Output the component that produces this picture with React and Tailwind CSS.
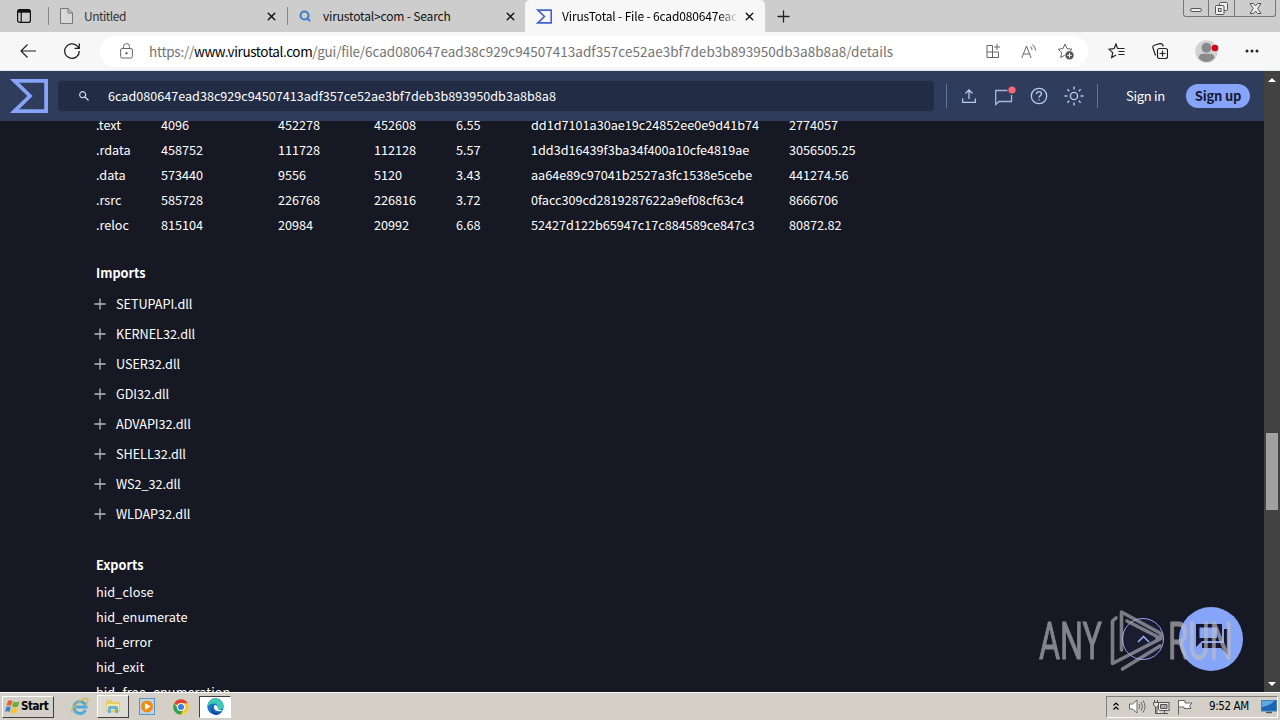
import { Search, X, Plus } from "lucide-react";

const sections = [
  [".text", "4096", "452278", "452608", "6.55", "dd1d7101a30ae19c24852ee0e9d41b74", "2774057"],
  [".rdata", "458752", "111728", "112128", "5.57", "1dd3d16439f3ba34f400a10cfe4819ae", "3056505.25"],
  [".data", "573440", "9556", "5120", "3.43", "aa64e89c97041b2527a3fc1538e5cebe", "441274.56"],
  [".rsrc", "585728", "226768", "226816", "3.72", "0facc309cd2819287622a9ef08cf63c4", "8666706"],
  [".reloc", "815104", "20984", "20992", "6.68", "52427d122b65947c17c884589ce847c3", "80872.82"],
];

const imports = [
  "SETUPAPI.dll",
  "KERNEL32.dll",
  "USER32.dll",
  "GDI32.dll",
  "ADVAPI32.dll",
  "SHELL32.dll",
  "WS2_32.dll",
  "WLDAP32.dll",
];

const exportsList = ["hid_close", "hid_enumerate", "hid_error", "hid_exit", "hid_free_enumeration"];

function VtLogo({ className, stroke }) {
  return (
    <svg viewBox="0 0 38 34" className={className} fill="none" stroke={stroke} strokeWidth="3.8">
      <path d="M4.5 1.9H36.1V32.1H4.5L20 17Z" />
    </svg>
  );
}

function TabBar() {
  return (
    <div className="flex h-8 bg-[#cdcdcd] text-[12px]">
      <div className="flex w-12 items-center pl-[17px]">
        <svg width="14" height="14" viewBox="0 0 14 14" fill="none" stroke="#111" strokeWidth="1.2">
          <rect x="0.6" y="0.6" width="12.8" height="12.8" rx="2" />
          <path d="M1 2.2H13" strokeWidth="3" />
          <path d="M4.2 3V13" />
        </svg>
      </div>
      <div className="my-[7px] w-px bg-[#858585]" />
      <div className="flex w-[238px] items-center pl-[11px]">
        <svg width="13" height="16" viewBox="0 0 13 16" fill="#d8d8d8" stroke="#777">
          <path d="M1 .5H8L12.500 5V15.500H.5V.5ZM8 .5V5H12.500" />
        </svg>
        <span className="ml-[11px] flex-1 tracking-[-0.5px] text-[#333]">Untitled</span>
        <X size={13} strokeWidth={2.6} color="#111" className="mr-[9px]" />
      </div>
      <div className="my-[7px] w-px bg-[#858585]" />
      <div className="flex w-[237px] items-center pl-[11px]">
        <Search size={12} strokeWidth={4} color="#3c7fc4" />
        <span className="ml-3 flex-1 tracking-[-0.16px] text-[#111]">virustotal&gt;com - Search</span>
        <X size={13} strokeWidth={2.6} color="#111" className="mr-[8px]" />
      </div>
      <div className="flex w-[240px] items-center rounded-t-[5px] bg-[#f7f7f7] pl-[11px]">
        <VtLogo className="h-[15px] w-4" stroke="#3f62d0" />
        <div className="ml-[10px] w-[174px] overflow-hidden bg-gradient-to-r from-black from-90% to-black/10 bg-clip-text tracking-[-0.16px] whitespace-nowrap text-transparent">
          VirusTotal - File - 6cad080647ead3
        </div>
        <X size={13} strokeWidth={2.6} color="#111" className="ml-[7px]" />
      </div>
      <div className="flex flex-1 items-center pl-[9px]">
        <Plus size={19} strokeWidth={1.6} color="#222" />
      </div>
      <div className="mr-1 flex h-[17px] w-[93px] rounded-b-[3px] border border-t-0 border-[#777]">
        <div className="flex w-[25px] items-center justify-center border-r border-[#777]">
          <div className="mt-1 h-1 w-3 rounded-[2px] border border-[#555] bg-[#eee]" />
        </div>
        <div className="flex w-[26px] items-center justify-center border-r border-[#777]">
          <svg width="13" height="13" viewBox="0 0 13 13" fill="#eee" stroke="#555">
            <rect x="4.500" y=".5" width="8" height="8" rx="1" />
            <rect x=".5" y="3.500" width="8.500" height="9" rx="1" />
            <rect x="3.500" y="6.500" width="2.500" height="3" />
          </svg>
        </div>
        <div className="flex flex-1 items-center justify-center">
          <svg width="13" height="11" viewBox="0 0 13 11" fill="#eee" stroke="#555">
            <path d="M1 .5H4.500L6.500 3L8.500 .5H12L8.700 5.500L12 10.500H8.500L6.500 8L4.500 10.500H1L4.300 5.500Z" />
          </svg>
        </div>
      </div>
    </div>
  );
}

const STAR = "M8 1L10 5.700L15 6.200L11.300 9.600L12.300 14.600L8 12L3.700 14.600L4.700 9.600L1 6.200L6 5.700Z";

function Toolbar() {
  return (
    <div className="flex h-[39px] items-center border-b border-[#dfe6f0] bg-[#f7f7f7]">
      <svg width="16" height="14" viewBox="0 0 16 14" fill="none" stroke="#222" strokeWidth="1.2" className="ml-5">
        <path d="M16 7H1M7.500 .5L1 7L7.500 13.500" />
      </svg>
      <svg width="16" height="16" viewBox="0 0 16 16" fill="none" stroke="#222" strokeWidth="1.3" className="ml-7">
        <path d="M15.300 8A7.300 7.300 0 1 1 12.800 2.600L15 5M15.300 .5V5.300H10.500" />
      </svg>
      <div className="ml-5 flex h-[31px] w-[988px] items-center rounded-full bg-white">
        <svg width="13" height="16" viewBox="0 0 13 16" fill="none" stroke="#666" className="ml-[20px]">
          <rect x=".6" y="5.500" width="11.800" height="9.500" rx="1.500" />
          <path d="M3.500 5.500V3.500A3 3 0 0 1 9.500 3.500V5.500" />
          <circle cx="6.500" cy="10.200" r=".8" fill="#666" />
        </svg>
        <div className="ml-4 flex-1 text-[13.5px] whitespace-nowrap text-[#747474]">
          <span className="tracking-[-0.27px]">https://</span>
          <span className="tracking-[-0.38px] text-black">www.virustotal.com</span>
          <span className="tracking-[-0.2px]">/gui/file/</span>
          <span className="tracking-[0.03px]">6cad080647ead38c929c94507413adf357ce52ae3bf7deb3b893950db3a8b8a8</span>
          <span>/details</span>
        </div>
        <svg width="16" height="15" viewBox="0 0 15 15" fill="none" stroke="#666" className="mr-[20px]">
          <path d="M7 1.500H1.500V13.500H13V8H1.500M7 1.500V13.500M13 8V13.500M11.500 0V6M8.500 3H14.500" />
        </svg>
        <svg width="16" height="15" viewBox="0 0 16 15" fill="none" stroke="#666" className="mr-[20px]">
          <path d="M.8 14L5.500 2L10.200 14M2.500 10H8.500M9.500 2.500A5 5 0 0 1 11 6M11.500 .5A8 8 0 0 1 14.500 6.500" />
        </svg>
        <svg width="17" height="17" viewBox="0 0 17 17" fill="none" stroke="#666" className="mr-[14px]">
          <path d={STAR} />
          <circle cx="12.500" cy="12.300" r="4.500" fill="#555" stroke="#fff" strokeWidth=".6" />
          <path d="M12.500 10V14.600M10.200 12.300H14.800" stroke="#fff" />
        </svg>
      </div>
      <svg width="17" height="16" viewBox="0 0 17 16" fill="none" stroke="#222" strokeWidth="1.2" className="ml-[20px]">
        <path d="M9.500 5.500L8 1L6 5.700L1 6.200L4.700 9.600L3.700 14.600L8 12M9.500 5.500H16.500M10.500 8.500H16.500M10.500 11.500H16.500" />
      </svg>
      <svg width="16" height="16" viewBox="0 0 16 16" fill="none" stroke="#222" strokeWidth="1.2" className="ml-[27px]">
        <rect x="5.500" y="5.500" width="10" height="10" rx="2" />
        <path d="M10.500 7.500V13.500M7.500 10.500H13.500M3.500 12.500L1 5Q.3 3 2.300 2.200L7.800 .7Q10 .2 10.800 2.200L11.300 3.500" />
      </svg>
      <svg width="24" height="23" viewBox="0 0 24 23" className="ml-[27px]">
        <circle cx="11.500" cy="11.500" r="11.300" fill="#d2d2d2" />
        <circle cx="11.500" cy="7.800" r="5" fill="#8a8a8a" />
        <path d="M3.500 18Q4 13.800 8 13.800H15Q19 13.800 19.500 18Q16 22 11.500 22T3.500 18Z" fill="#8a8a8a" />
        <circle cx="20" cy="8" r="3.300" fill="#d00818" />
      </svg>
      <svg width="14" height="4" viewBox="0 0 14 4" fill="#222" className="ml-[26px]">
        <circle cx="2" cy="2" r="1.500" />
        <circle cx="7" cy="2" r="1.500" />
        <circle cx="12" cy="2" r="1.500" />
      </svg>
    </div>
  );
}

function SiteHeader() {
  return (
    <header className="flex h-[50px] shrink-0 items-center bg-[#303c5c]">
      <VtLogo className="ml-[10px] h-[34px] w-[38px]" stroke="#86a5f8" />
      <div className="ml-[10px] flex h-[30px] w-[876px] items-center rounded-[4px] bg-[#232c45]">
        <svg width="10" height="10" viewBox="0 0 10 10" fill="none" stroke="#d5daea" strokeWidth="1.2" className="ml-[21px]">
          <circle cx="3.700" cy="3.700" r="3" />
          <path d="M6 6L9.500 9.500" />
        </svg>
        <span className="ml-[19px] text-[12.6px] tracking-[0.01px] text-white">
          6cad080647ead38c929c94507413adf357ce52ae3bf7deb3b893950db3a8b8a8
        </span>
      </div>
      <div className="ml-3 h-6 w-px bg-[#64739b]" />
      <svg width="14" height="14" viewBox="0 0 14 14" fill="none" stroke="#b8c7ee" strokeWidth="1.3" className="ml-[15px]">
        <path d="M7 10V1M3.500 4.500L7 1L10.500 4.500M.7 9.500V13.300H13.300V9.500" />
      </svg>
      <svg width="22" height="20" viewBox="0 0 22 20" fill="none" stroke="#a8b8e0" strokeWidth="1.3" className="ml-[18px]">
        <path d="M13.500 4.500H1.700V18.500L5 15.500H17.500V9" />
        <circle cx="18" cy="4" r="3.600" fill="#ff6672" stroke="none" />
      </svg>
      <svg width="18" height="18" viewBox="0 0 18 18" fill="none" stroke="#b8c7ee" strokeWidth="1.3" className="ml-[14px]">
        <circle cx="9" cy="9" r="7.700" />
        <path d="M6.500 7Q6.500 4.700 9 4.700T11.500 7C11.500 8.600 9 8.700 9 10.800M9 12.300V13.600" />
      </svg>
      <svg width="20" height="20" viewBox="0 0 20 20" fill="none" stroke="#b8c7ee" strokeWidth="1.4" className="ml-[16px]">
        <circle cx="10" cy="10" r="3.600" />
        <path d="M10 .5V3.500M10 16.500V19.500M.5 10H3.500M16.500 10H19.500M3.300 3.300L5.300 5.300M14.700 14.700L16.700 16.700M16.700 3.300L14.700 5.300M5.300 14.700L3.300 16.700" />
      </svg>
      <div className="ml-[13px] h-6 w-px bg-[#64739b]" />
      <span className="ml-7 w-[60px] text-[13px] tracking-[-0.3px] text-white">Sign in</span>
      <button className="flex h-6 w-16 items-center justify-center rounded-full bg-[#86a5f8] text-[13px] font-bold tracking-[-0.2px] text-[#161a33]">
        Sign up
      </button>
    </header>
  );
}

function Details() {
  return (
    <main className="min-h-0 flex-1 overflow-hidden pl-24 text-[12.7px] text-white">
      <div className="-mt-[9px] tracking-[-0.03px]">
        {sections.map((row) => (
          <div key={row[0]} className="grid h-[25px] grid-cols-[65px_117px_96px_82px_75px_258px_100px] items-center">
            {row.map((cell, i) => (
              <span key={i}>{cell}</span>
            ))}
          </div>
        ))}
      </div>
      <h3 className="mt-6 flex h-[23px] items-center font-bold">Imports</h3>
      <div className="mt-[5px]">
        {imports.map((name) => (
          <div key={name} className="-ml-[2px] flex h-[30px] items-center">
            <svg width="12" height="12" viewBox="0 0 12 12" stroke="#b8b9c2" strokeWidth="1.3">
              <path d="M6 .5V11.500M.5 6H11.500" />
            </svg>
            <span className="ml-[10px] tracking-[-0.06px]">{name}</span>
          </div>
        ))}
      </div>
      <h3 className="mt-6 flex h-[23px] items-center font-bold">Exports</h3>
      <div className="mt-[3px] tracking-[0.08px]">
        {exportsList.map((name) => (
          <div key={name} className="flex h-[25px] items-center">
            {name}
          </div>
        ))}
      </div>
    </main>
  );
}

function FloatingButtons() {
  return (
    <svg width="212" height="80" viewBox="1036 600 212 80" className="absolute right-4 bottom-3">
      <circle cx="1143" cy="639" r="20.500" fill="#1b1c32" stroke="#8ba4f0" />
      <path d="M1138 642L1143.500 636.500L1149 642" fill="none" stroke="#9cb0ef" strokeWidth="1.500" />
      <circle cx="1211" cy="639" r="32" fill="#86a5f8" />
      <path d="M1196 624H1222V641H1202L1196 647ZM1224 629H1227.500V655L1221 648H1202V643H1224Z" fill="#17182d" />
      <path d="M1199.500 627.500H1217V638H1199.500Z" fill="#86a5f8" />
      <g opacity=".65" fill="none" stroke="#b2b2b6" strokeWidth="3.600" strokeLinejoin="round" strokeLinecap="round">
        <path d="M1116 618L1112.500 621V663.500L1161 638.500L1127 621" />
        <path d="M1121.500 650V612L1159 632.500Q1163 635 1160 638L1157 639" />
        <path d="M1160 646L1122.500 669" />
      </g>
      <g
        opacity=".65"
        fill="#bfbfc4"
        stroke="#bfbfc4"
        strokeWidth=".9"
        className="font-['Roboto','Liberation_Sans_Narrow',sans-serif]"
        fontSize="51"
      >
        <text x="1039" y="659" textLength="63" lengthAdjust="spacingAndGlyphs">ANY</text>
        <text x="1168" y="659" textLength="65" lengthAdjust="spacingAndGlyphs">RUN</text>
      </g>
    </svg>
  );
}

function Scrollbar() {
  return (
    <div className="flex w-4 flex-col items-center bg-[#424242]">
      <div className="mt-[7px] border-x-4 border-b-4 border-x-transparent border-b-white" />
      <div className="mt-[351px] h-[77px] w-3 bg-[#a1a1a1]" />
      <div className="mt-auto mb-1.5 border-x-4 border-t-4 border-x-transparent border-t-white" />
    </div>
  );
}

function Taskbar() {
  return (
    <div className="flex h-[28px] items-center border-t border-white bg-[#d4d0c8] font-['DejaVu_Sans_Condensed','DejaVu_Sans',sans-serif]">
      <div className="ml-[2px] flex h-[22px] w-[52px] items-center border border-t-white border-r-[#404040] border-b-[#404040] border-l-white pl-[2px]">
        <svg width="15" height="14" viewBox="0 0 15 14">
          <path d="M3 1Q5-.5 7.500 1L6 6Q4 4.500 1.500 6Z" fill="#e9602c" />
          <path d="M8.500 1.500Q11 3 14.500 1.500L13 6.500Q10 8 7 6.500Z" fill="#70ad37" />
          <path d="M1.200 7Q4 5.800 5.800 7L4.500 12Q2 10.500 0 12Z" fill="#3e7fd0" />
          <path d="M6.800 7.700Q10 9 12.700 7.700L11.300 12.500Q8 14 5.500 12.500Z" fill="#f5c52b" />
        </svg>
        <span className="ml-px text-[11.5px] font-bold tracking-[-0.45px] text-black">Start</span>
      </div>
      <svg width="18" height="18" viewBox="0 0 18 18" fill="none" className="ml-[17px]">
        <path d="M14.500 12A6 6 0 1 1 15 9H5" stroke="#4eabd9" strokeWidth="3" />
        <path d="M1 15Q-1 11 8 4T17 3Q17 5 14 8" stroke="#e0b23c" strokeWidth="1.300" />
      </svg>
      <div className="ml-[8px] flex h-[23px] w-8 items-center justify-center border border-t-white border-r-[#404040] border-b-[#404040] border-l-white bg-[#dedbd4]">
        <svg width="16" height="15" viewBox="0 0 16 15">
          <path d="M1 3L2 1H7L8 3H15V13H1Z" fill="#e6cd68" />
          <path d="M2 5H14V11H2Z" fill="#f7e9a2" />
          <path d="M3 14V9Q3 7 5 7H11Q13 7 13 9V14H10V10H6V14Z" fill="#62b3d9" />
        </svg>
      </div>
      <svg width="16" height="17" viewBox="0 0 16 17" className="ml-[10px]">
        <rect x=".5" y=".5" width="15" height="16" fill="#b9d5e8" stroke="#5f94be" />
        <circle cx="8" cy="8.500" r="6" fill="#f28a16" />
        <path d="M6 5L11.500 8.500L6 12Z" fill="#fff" />
      </svg>
      <svg width="16" height="16" viewBox="0 0 16 16" className="ml-[18px]">
        <circle cx="8" cy="8" r="7.800" fill="#f9cb31" />
        <path d="M8 8L1.200 4.200A7.800 7.800 0 0 1 14.800 4.200H8Z" fill="#dd4437" />
        <path d="M1.200 4.200A7.800 7.800 0 0 0 7.500 15.800L11 9.500L4.700 9.500Z" fill="#2fa350" />
        <circle cx="8" cy="8" r="4" fill="#fff" />
        <circle cx="8" cy="8" r="3" fill="#3d7ce8" />
      </svg>
      <div className="ml-[10px] flex h-[22px] w-8 items-center justify-center border border-t-[#404040] border-r-white border-b-white border-l-[#404040] bg-white">
        <svg width="17" height="17" viewBox="0 0 17 17">
          <circle cx="8.500" cy="8.500" r="8.200" fill="#1675c5" />
          <path d="M.5 7A8.200 8.200 0 0 1 16.700 8Q16.500 11.500 12.500 11.500Q9.500 11.500 10.500 9.500Q11 5.500 6.500 5.500Q2.500 5.500 .5 9Z" fill="#40c8b8" />
          <path d="M6 7.500Q4 13 10 14.500Q13 15 15 13.500Q12 18 7 16.500Q2 14 6 7.500Z" fill="#164c9c" />
          <path d="M7.500 7Q5.500 11.500 10.500 13Q14 13.500 15.700 12Q10.500 12.500 10.500 9.500Q10.800 7.500 7.500 7Z" fill="#fff" />
        </svg>
      </div>
      <div className="mr-[2px] ml-auto flex h-[22px] w-[172px] items-center border border-t-[#808080] border-r-white border-b-white border-l-[#808080]">
        <svg width="6" height="9" viewBox="0 0 6 9" fill="none" stroke="#000" strokeWidth="1.200" className="ml-[6px]">
          <path d="M.5 3.500L3 1L5.500 3.500M.5 7.500L3 5L5.500 7.500" />
        </svg>
        <svg width="17" height="15" viewBox="0 0 17 15" fill="#fff" stroke="#666" className="ml-[10px]">
          <path d="M.5 5H3.500L8 1V14L3.500 10H.5Z" />
          <path d="M10 5Q11.500 7.500 10 10M12 3Q15 7.500 12 12M14 1.500Q18 7.500 14 13.500" fill="none" />
        </svg>
        <svg width="17" height="16" viewBox="0 0 17 16" fill="#eee" stroke="#555" className="ml-[7px]">
          <rect x="5.500" y="3.500" width="10.500" height="8" />
          <path d="M7.500 5.500H14V9.500H7.500Z" fill="#aaa" />
          <path d="M8 14.500H15M11.500 12V14M.5 3.500H5.500V6L4 8V14.500H8M1.500 1V3.500M4.500 1V3.500M.5 3.500V6L2.500 8V14.500H4" />
        </svg>
        <svg width="16" height="16" viewBox="0 0 16 16" fill="#fff" stroke="#666" className="ml-[7px]">
          <path d="M1.500 1V15.500M1.500 1.500H8V4H15L12.500 7L14 9.500H7V8H1.500" />
        </svg>
        <span className="ml-[16px] text-[11.5px] tracking-[-0.4px] whitespace-nowrap text-black">9:52 AM</span>
        <svg width="16" height="14" viewBox="0 0 16 14" className="ml-auto">
          <rect x=".5" y=".5" width="15" height="10.500" fill="#1d65b5" stroke="#3d7fbc" />
          <path d="M1 1H13Q10 5 1 7Z" fill="#5ba8e2" />
          <path d="M5 12.500H11" stroke="#555" strokeWidth="1.500" />
        </svg>
      </div>
    </div>
  );
}

export default function App() {
  return (
    <div className="flex h-[720px] w-[1280px] flex-col overflow-hidden bg-[#161824] font-['Noto_Sans_CJK_SC',sans-serif]">
      <TabBar />
      <Toolbar />
      <div className="flex min-h-0 flex-1">
        <div className="relative flex min-w-0 flex-1 flex-col">
          <SiteHeader />
          <Details />
          <FloatingButtons />
        </div>
        <Scrollbar />
      </div>
      <Taskbar />
    </div>
  );
}
